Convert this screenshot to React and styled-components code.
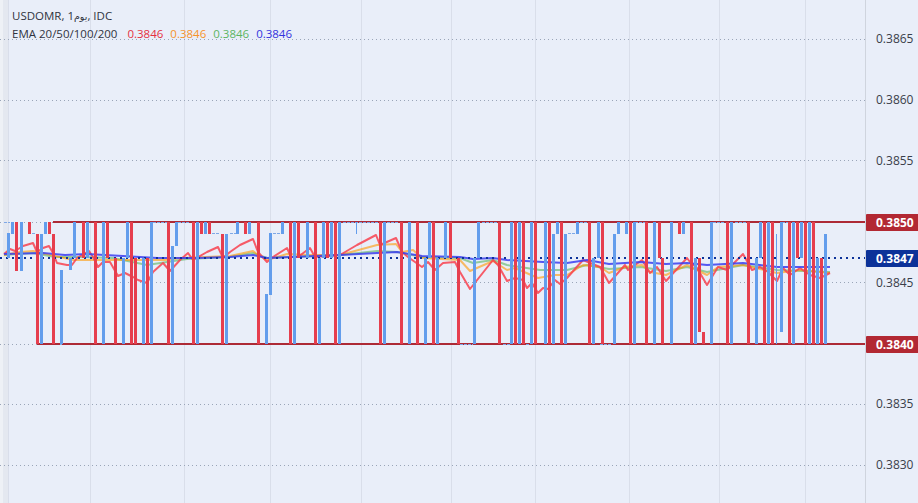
import React from "react";
import styled, { createGlobalStyle } from "styled-components";

const TOP = 222;
const BOTTOM = 344;

// [x, top, bottom, thin]
const blueBars = [
	[8, 233, 258], [12, 222, 234], [21, 222, 271], [41, 234, 344], [45, 222, 234], [61, 270, 344], [70, 258, 270], [74, 222, 258],
	[87, 222, 258], [103, 222, 344], [123, 258, 344], [127, 222, 258], [143, 258, 344], [151, 222, 344], [172, 246, 344], [176, 222, 246],
	[197, 222, 344], [205, 222, 234], [226, 234, 344], [237, 222, 234], [249, 222, 234], [266, 294, 344], [270, 233, 295], [282, 222, 234],
	[294, 222, 344], [307, 222, 258], [319, 258, 344], [323, 222, 258], [331, 222, 258], [339, 222, 344], [356, 222, 234, true], [384, 222, 344],
	[409, 222, 344], [425, 258, 344], [429, 222, 258], [437, 258, 344], [445, 222, 258], [474, 258, 344], [478, 222, 258], [511, 222, 344],
	[519, 222, 344], [531, 222, 344], [545, 222, 344], [553, 234, 344], [557, 222, 234], [565, 234, 344], [577, 222, 234], [593, 258, 344],
	[598, 222, 258], [614, 234, 344], [618, 222, 234], [626, 222, 234], [634, 222, 344], [654, 222, 344], [671, 222, 344], [683, 222, 234],
	[695, 258, 344], [711, 222, 344], [731, 222, 344], [756, 258, 344], [760, 222, 258], [768, 222, 344], [776, 234, 344, true], [781, 222, 332],
	[793, 222, 344], [801, 222, 258], [809, 222, 344], [817, 258, 344], [825, 234, 344],
];

const redBars = [
	[16, 222, 271], [29, 222, 234], [37, 234, 344], [49, 222, 234], [53, 234, 344], [83, 222, 258], [95, 222, 344], [107, 222, 258],
	[115, 258, 344], [131, 222, 344], [135, 258, 344], [147, 258, 344], [168, 222, 344], [193, 222, 344], [201, 222, 234], [209, 222, 234],
	[222, 234, 344], [245, 222, 234], [258, 222, 344], [290, 222, 344], [298, 222, 258], [315, 222, 344], [327, 222, 258], [335, 222, 344],
	[380, 222, 344], [401, 222, 344], [417, 222, 344], [433, 222, 344], [450, 222, 258], [458, 258, 344], [499, 222, 344], [515, 222, 344],
	[523, 222, 344], [535, 222, 344], [549, 222, 344], [561, 222, 344], [589, 222, 344], [602, 222, 344], [630, 222, 344], [646, 222, 344],
	[659, 222, 258], [662, 258, 344], [679, 222, 234], [691, 222, 344], [699, 258, 332], [703, 332, 344], [727, 222, 344], [748, 222, 344],
	[764, 222, 344], [772, 222, 344], [789, 222, 344], [797, 222, 258], [805, 222, 344], [813, 222, 344], [821, 258, 344],
];

// flat candles, a 1px dash where open and close are the same: [x1, x2, y]
const flatBars = [
	[4, 10, 222], [32, 36, 233], [212, 220, 233], [230, 236, 233], [273, 281, 233], [568, 575, 233],
	[153, 167, 222], [178, 190, 222], [343, 378, 222], [387, 398, 222], [482, 497, 222], [580, 587, 222], [635, 645, 222], [713, 725, 222], [735, 747, 222], [782, 788, 222],
	[460, 473, 344], [503, 510, 344], [526, 530, 344], [60, 62, 344], [600, 612, 344],
];

const emaLines = [
	{
		color: "#4caf50",
		opacity: 0.55,
		points: "4,255 33,253 55,257 80,257 113,258 147,265 167,262 187,259 230,257 253,253 267,258 340,255 377,251 397,252 422,257 460,258 473,263 493,260 507,265 540,270 567,270 587,265 609,269 641,267 666,271 687,267 707,272 743,265 777,270 830,272",
	},
	{
		color: "#ff9800",
		opacity: 0.6,
		points: "4,255 20,252 33,251 73,260 102,260 120,260 148,260 165,260 180,258 230,256 253,251 258,255 267,260 287,254 310,255 340,255 377,245 396,244 402,252 413,250 422,258 460,260 470,271 493,261 507,270 515,268 538,278 555,275 567,275 583,265 600,267 609,273 625,267 642,265 650,272 666,275 687,265 707,275 718,267 743,265 777,273 800,270 830,273",
	},
	{
		color: "#f8414f",
		opacity: 0.85,
		points: "4,254 10,249 15,251 23,246 33,243 37,252 43,248 49,246 53,253 57,263 67,265 72,265 77,258 89,251 93,257 98,267 103,262 110,262 118,276 125,273 133,277 138,280 147,283 153,272 163,263 170,271 180,260 188,253 193,260 207,252 218,247 223,258 230,252 240,245 253,239 258,252 267,262 273,257 287,248 291,257 298,257 310,248 315,257 340,255 357,245 376,235 380,245 396,238 402,252 408,257 422,267 428,262 435,270 443,263 455,262 460,272 470,289 493,260 498,265 507,281 515,278 523,280 527,288 532,283 538,293 543,288 548,289 555,280 560,284 567,278 583,260 600,267 609,283 625,265 628,270 642,260 650,273 657,267 666,281 687,258 690,262 697,268 707,285 718,267 727,270 743,254 752,270 760,267 768,272 777,281 783,268 790,275 800,268 810,275 820,278 830,273",
	},
	{
		color: "#3b3df0",
		opacity: 0.85,
		points: "4,254 43,253 65,255 87,254 123,256 157,258 197,258 230,257 253,255 267,258 340,255 377,253 397,252 422,256 460,257 473,259 493,258 507,260 543,262 567,263 587,260 609,264 641,262 666,264 687,263 707,265 743,263 777,267 830,267",
	},
];

const priceTicks = ["0.3865", "0.3860", "0.3855", "0.3850", "0.3845", "0.3840", "0.3835", "0.3830"];
const verticalGrid = [8, 90, 184, 270, 361, 451, 535, 629, 719, 805];
const horizontalGrid = [39, 100, 160, 222, 282, 344, 404, 465];
const emaValues = ["#e5303f", "#f7932b", "#5cb462", "#3333dd"];

const GlobalStyle = createGlobalStyle`
	html, body {
		margin: 0;
		padding: 0;
		background: #e9eef9;
	}
`;

const Chart = styled.div`
	position: relative;
	display: flex;
	width: 918px;
	height: 503px;
	overflow: hidden;
	background: #e9eef9;
	font-family: "Open Sans", "Noto Sans", "DejaVu Sans", sans-serif;
	font-size: 12px;
	color: #131722;
`;

const Pane = styled.div`
	position: relative;
	width: 866px;
	height: 503px;
	border-right: 1px solid #cfd4de;
	box-sizing: border-box;
`;

const LeftEdge = styled.div`
	position: absolute;
	left: 0;
	top: 0;
	width: 8px;
	height: 100%;
	background: linear-gradient(to right, #eef1f6 3px, #e4e8f0 3px);
`;

const Plot = styled.svg`
	position: relative;
	display: block;
`;

const Legend = styled.div`
	position: absolute;
	top: 8px;
	left: 12px;
	display: flex;
	flex-direction: column;
	gap: 1px;
	line-height: 16px;
	font-size: 11.5px;
	color: #2f3340;
`;

const LegendRow = styled.div`
	display: flex;
	gap: 7px;
	white-space: nowrap;
`;

const StudyName = styled.span`
	margin-right: 3px;
`;

const ArabicUnit = styled.span`
	font-size: 9.5px;
`;

const LegendValue = styled.span`
	color: ${(p) => p.$color};
`;

const Axis = styled.div`
	flex: 1;
	display: flex;
	flex-direction: column;
	padding-top: 9px;
`;

const Tick = styled.div`
	height: 60.9px;
	line-height: 60px;
	padding-left: 10px;
	color: #3a3e4a;
	font-size: 12px;
`;

const Badge = styled.div`
	position: absolute;
	left: 866px;
	top: ${(p) => p.$top}px;
	width: 52px;
	height: 17px;
	line-height: 17px;
	padding-left: 10px;
	box-sizing: border-box;
	border-radius: 1px 0 0 1px;
	background: ${(p) => p.$bg};
	color: #fff;
	font-size: 12px;
	font-weight: 700;
`;

const Bars = ({ data, color }) =>
	data.map(([x, y1, y2, thin], i) => (
		<rect key={i} x={thin ? x : x - 1} y={y1} width={thin ? 1 : 3} height={y2 - y1} fill={color} shapeRendering="crispEdges" />
	));

export default function App() {
	return (
		<Chart>
			<GlobalStyle />
			<Pane>
				<LeftEdge />
				<Plot width="865" height="503">
					{verticalGrid.map((x) => (
						<line key={x} x1={x + 0.5} x2={x + 0.5} y1="0" y2="503" stroke="#d9deea" />
					))}
					{horizontalGrid.map((y) => (
						<line key={y} x1="0" x2="865" y1={y + 0.5} y2={y + 0.5} stroke="#9aa5b8" strokeDasharray="1 3" />
					))}
					<line x1="53" x2="865" y1={TOP} y2={TOP} stroke="#ad2a36" strokeWidth="2" />
					<line x1="37" x2="865" y1={BOTTOM} y2={BOTTOM} stroke="#ad2a36" strokeWidth="2" />
					{emaLines.map((l) => (
						<polyline key={l.color} points={l.points} fill="none" stroke={l.color} strokeWidth="2" strokeOpacity={l.opacity} strokeLinejoin="round" />
					))}
					<line x1="0" x2="865" y1="258" y2="258" stroke="#0c3299" strokeWidth="2" strokeDasharray="2 4" />
					{flatBars.map(([x1, x2, y]) => (
						<line key={x1 + "-" + y} x1={x1} x2={x2} y1={y + 0.5} y2={y + 0.5} stroke="#7fa8e6" strokeDasharray="3 1" />
					))}
					<Bars data={blueBars} color="#639dec" />
					<Bars data={redBars} color="#e63e4e" />
				</Plot>
				<Legend>
					<LegendRow>
						<span>USDOMR, 1<ArabicUnit>يوم</ArabicUnit>, IDC</span>
					</LegendRow>
					<LegendRow>
						<StudyName>EMA 20/50/100/200</StudyName>
						{emaValues.map((color) => (
							<LegendValue key={color} $color={color}>0.3846</LegendValue>
						))}
					</LegendRow>
				</Legend>
			</Pane>
			<Axis>
				{priceTicks.map((t) => (
					<Tick key={t}>{t}</Tick>
				))}
			</Axis>
			<Badge $top={214} $bg="#b22833">0.3850</Badge>
			<Badge $top={250} $bg="#0c3299">0.3847</Badge>
			<Badge $top={336} $bg="#b22833">0.3840</Badge>
		</Chart>
	);
}
